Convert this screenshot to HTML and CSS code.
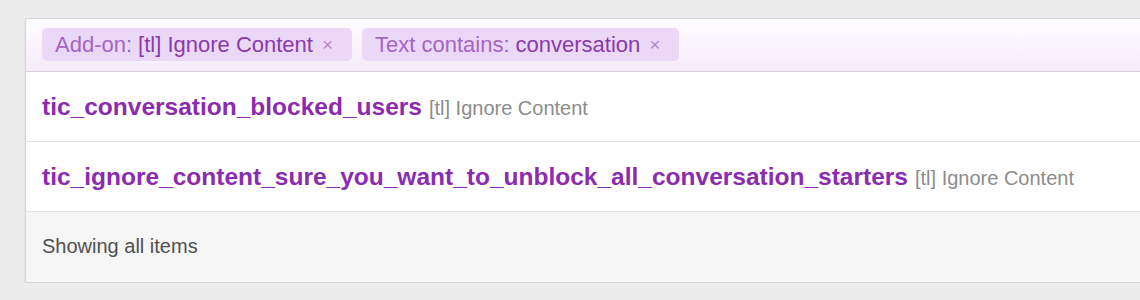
FILE: index.html
```html
<!DOCTYPE html>
<html lang="en">

<head>
    <meta charset="UTF-8">
    <title>Phrases</title>
    <link rel="stylesheet" href="styles.css">
</head>

<body>
    <div class="block-container">
        <div class="filter-bar">
            <span class="filter-chip">
                <span class="chip-label">Add-on:</span>
                <span class="chip-value">[tl] Ignore Content</span>
                <span class="chip-remove">&times;</span>
            </span>
            <span class="filter-chip">
                <span class="chip-label">Text contains:</span>
                <span class="chip-value">conversation</span>
                <span class="chip-remove">&times;</span>
            </span>
        </div>

        <ul class="data-list">
            <li class="data-row">
                <a class="row-title" href="#">tic_conversation_blocked_users</a>
                <span class="row-hint">[tl] Ignore Content</span>
            </li>
            <li class="data-row">
                <a class="row-title" href="#">tic_ignore_content_sure_you_want_to_unblock_all_conversation_starters</a>
                <span class="row-hint">[tl] Ignore Content</span>
            </li>
        </ul>

        <div class="block-footer">Showing all items</div>
    </div>
</body>

</html>
```

FILE: styles.css
```css
* {
    margin: 0;
    padding: 0;
    box-sizing: border-box;
}

body {
    font-family: "Liberation Sans", Arial, sans-serif;
    background-color: #ececec;
    color: #333;
    padding: 18px 0 0 25px;
    overflow: hidden;
}

.block-container {
    width: calc(100% + 20px);
    background-color: #fff;
    border: 1px solid #d6d6d6;
    border-radius: 4px;
    box-shadow: 0 1px 2px rgba(0, 0, 0, 0.12);
    overflow: hidden;
}

.filter-bar {
    display: flex;
    gap: 10px;
    padding: 9px 16px 10px;
    background: linear-gradient(to bottom, #fefcff, #f6ecfb);
    border-bottom: 1px solid #d9d4dc;
}

.filter-chip {
    display: flex;
    align-items: center;
    gap: 6px;
    height: 33px;
    padding: 0 19px 0 13px;
    background-color: #ebd8f7;
    border-radius: 5px;
    font-size: 22px;
}

.chip-label {
    color: #a464c6;
}

.chip-value {
    color: #8a3aad;
}

.chip-remove {
    color: #b48cc8;
    font-size: 19px;
    margin-left: 3px;
}

.data-list {
    list-style: none;
}

.data-row {
    display: flex;
    align-items: baseline;
    gap: 7px;
    height: 70px;
    padding: 21px 16px 0;
    border-bottom: 1px solid #e3e3e3;
}

.row-title {
    color: #8b2bb0;
    font-size: 24.5px;
    font-weight: bold;
    text-decoration: none;
}

.row-hint {
    color: #8c8c8c;
    font-size: 20px;
}

.block-footer {
    height: 70px;
    padding: 23px 16px 0;
    background-color: #f6f6f6;
    color: #505050;
    font-size: 20px;
}
```
